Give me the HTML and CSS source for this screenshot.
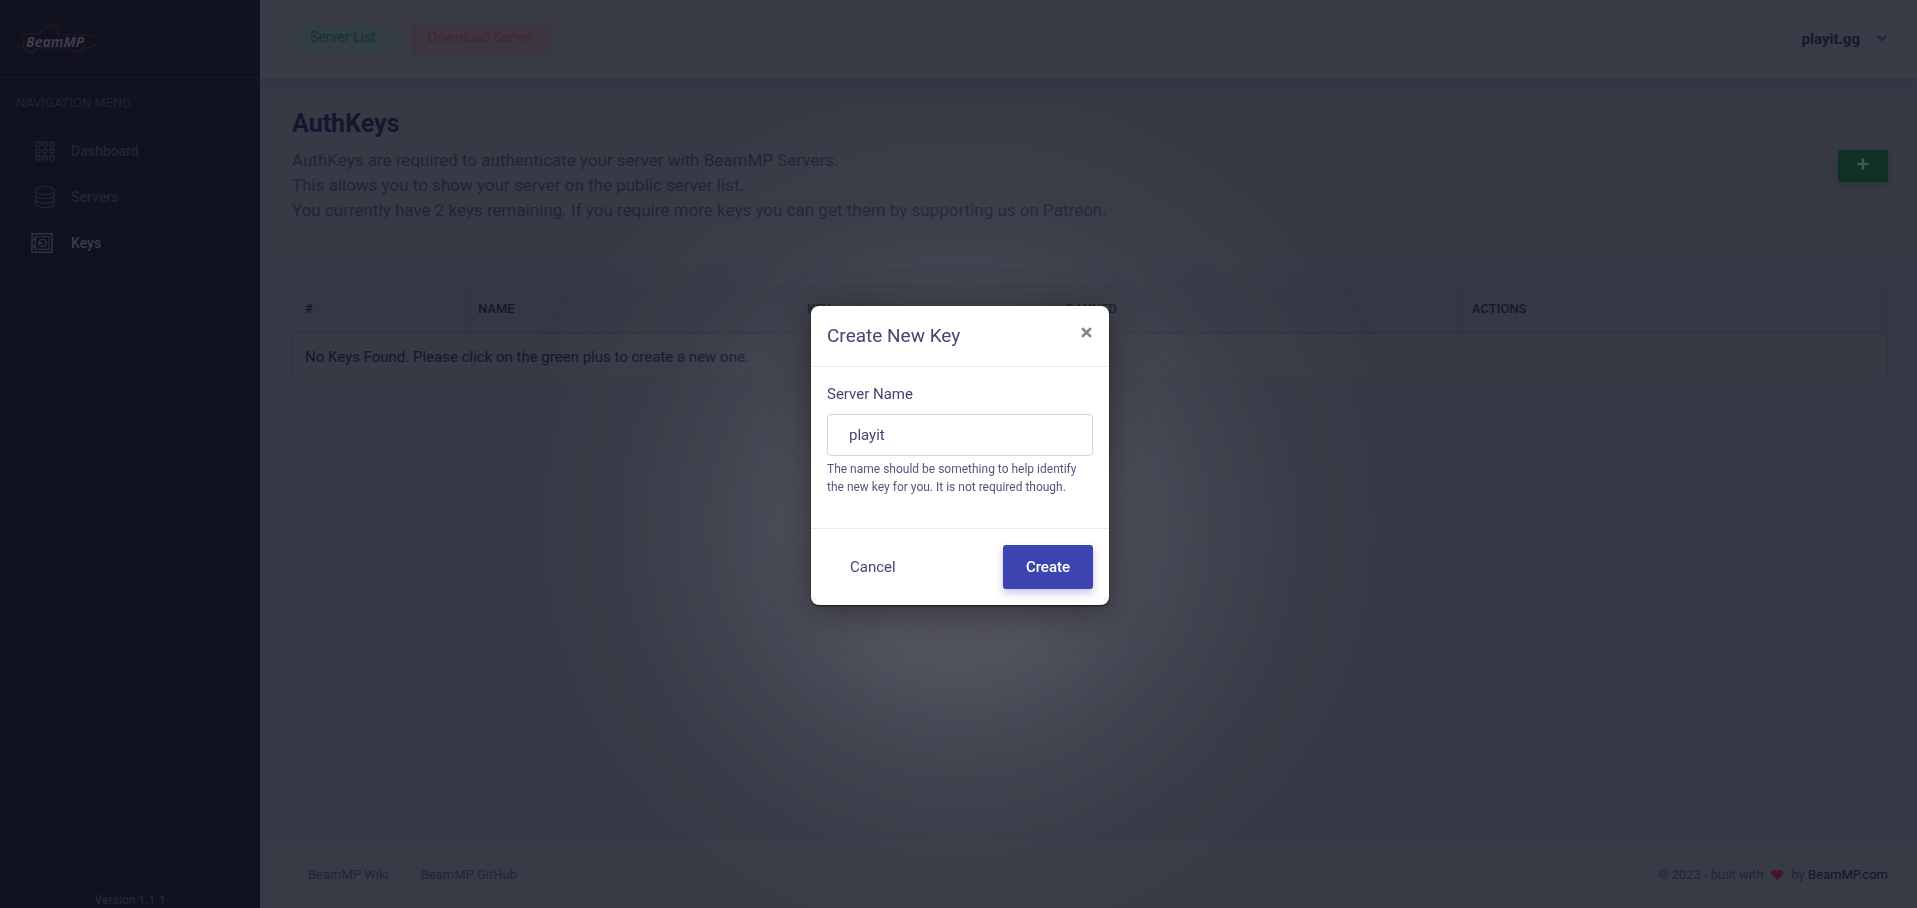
FILE: index.html
```html
<!DOCTYPE html>
<html lang="en">
<head>
<meta charset="utf-8">
<title>BeamMP AuthKeys</title>
<link rel="stylesheet" href="styles.css">
</head>
<body>
<div class="app">
  <aside class="sidebar">
    <a class="brand" href="#" aria-label="BeamMP">
      <svg width="80" height="34" viewBox="0 0 80 34">
        <g fill="none" stroke="#33191a" stroke-width="1.2" stroke-linecap="round">
          <path d="M4 14Q6 12 11 12H22Q30 4 34 3H43"/>
          <path d="M35 5H41V12M46 13H72L76 14"/>
          <path d="M1 25L4 26M7 18Q5 30 13 30Q19 30 20 26M24 26H51"/>
          <path d="M54 27Q57 30 62 30Q67 29 67 20M69 26Q75 25 78 23"/>
        </g>
        <text class="brand-text" x="9" y="25">BeamMP</text>
      </svg>
    </a>
    <h2 class="nav-title">NAVIGATION MENU</h2>
    <nav class="nav">
      <a class="nav-item" href="#">
        <svg width="24" height="24" viewBox="0 0 24 24" fill="none" stroke="currentColor" stroke-width="1.4">
          <circle cx="5" cy="5" r="2.3"/><circle cx="12" cy="5" r="2.3"/><circle cx="19" cy="5" r="2.3"/>
          <circle cx="5" cy="12" r="2.3"/><circle cx="12" cy="12" r="2.3"/><circle cx="19" cy="12" r="2.3"/>
          <circle cx="5" cy="19" r="2.3"/><circle cx="12" cy="19" r="2.3"/><circle cx="19" cy="19" r="2.3"/>
        </svg>
        <span>Dashboard</span>
      </a>
      <a class="nav-item" href="#">
        <svg width="24" height="24" viewBox="0 0 24 24" fill="none" stroke="currentColor" stroke-width="1.2">
          <ellipse cx="12" cy="5.500" rx="9.200" ry="4"/>
          <path d="M2.800 5.500V18.500C2.800 24 21.200 24 21.200 18.500V5.500M2.800 9.800C2.800 15 21.200 15 21.200 9.800M2.800 14.100C2.800 19.400 21.200 19.400 21.200 14.100"/>
        </svg>
        <span>Servers</span>
      </a>
      <a class="nav-item active" href="#">
        <svg class="safe" width="24" height="24" viewBox="0 0 24 24" fill="none" stroke="currentColor">
          <rect x="2" y="2.700" width="20" height="18.600" stroke-width="1.500"/>
          <rect x="5.500" y="5.700" width="13.500" height="12.600" stroke-width="1.100"/>
          <circle cx="12.500" cy="12" r="3.600" stroke-width="1.400"/>
          <path d="M8.500 12H12.500" stroke-width="1.600"/>
          <path d="M4.300 6.500V10M4.300 14V17.500" stroke-width="2"/>
        </svg>
        <span>Keys</span>
      </a>
    </nav>
    <p class="version">Version 1.1.1</p>
  </aside>

  <div class="main">
    <header class="topbar">
      <div class="topbar-links">
        <a class="pill pill-green" href="#">Server List</a>
        <a class="pill pill-red" href="#">Download Server</a>
      </div>
      <button class="account" type="button">
        <span>playit.gg</span>
        <svg width="10" height="8" viewBox="0 0 10 8" fill="none" stroke="#232435" stroke-width="2.200"><path d="M1 1L5 5L9 1"/></svg>
      </button>
    </header>

    <section class="intro">
      <h1>AuthKeys</h1>
      <div class="intro-row">
        <p>AuthKeys are required to authenticate your server with BeamMP Servers.<br>This allows you to show your server on the public server list.<br>You currently have 2 keys remaining. If you require more keys you can get them by supporting us on Patreon.</p>
        <button class="add" type="button" aria-label="Add key">
          <svg width="12" height="12" viewBox="0 0 12 12" stroke="#3d5850" stroke-width="2.400" stroke-linecap="round"><path d="M6 1.200V10.800M1.200 6H10.800"/></svg>
        </button>
      </div>
    </section>

    <main class="content">
      <table class="keys">
        <colgroup><col class="c-num"><col class="c-name"><col class="c-key"><col class="c-banned"><col></colgroup>
        <thead>
          <tr><th>#</th><th>NAME</th><th>KEY</th><th>BANNED</th><th>ACTIONS</th></tr>
        </thead>
        <tbody>
          <tr><td colspan="5">No Keys Found. Please click on the green plus to create a new one.</td></tr>
        </tbody>
      </table>
    </main>

    <footer class="footer">
      <div class="footer-links">
        <a href="#">BeamMP Wiki</a>
        <a href="#">BeamMP GitHub</a>
      </div>
      <p class="credit">
        <span>© 2023 - built with</span>
        <svg width="12" height="10" viewBox="0 0 12 10" fill="#43142b"><path d="M6 10L1 5.200C-1 3 .5 0 3 0C4.500 0 5.500 .8 6 1.600C6.500 .8 7.500 0 9 0C11.500 0 13 3 11 5.200Z"/></svg>
        <span>by <a href="#">BeamMP.com</a></span>
      </p>
    </footer>
  </div>
</div>

<div class="overlay">
  <form class="modal" role="dialog" aria-labelledby="modal-title">
    <div class="modal-header">
      <h2 id="modal-title">Create New Key</h2>
      <button class="close" type="button" aria-label="Close">
        <svg width="11" height="11" viewBox="0 0 10 10" stroke="#85858d" stroke-width="2.500"><path d="M1 1L9 9M9 1L1 9"/></svg>
      </button>
    </div>
    <div class="modal-body">
      <label for="server-name">Server Name</label>
      <input id="server-name" type="text" value="playit">
      <small>The name should be something to help identify the new key for you. It is not required though.</small>
    </div>
    <div class="modal-footer">
      <button class="btn" type="button">Cancel</button>
      <button class="btn btn-primary" type="button">Create</button>
    </div>
  </form>
</div>
</body>
</html>
```
FILE: styles.css
```css
* { box-sizing: border-box; }

body {
  margin: 0;
  font-family: Roboto, "Liberation Sans", sans-serif;
  font-size: 15px;
  background: #363845;
  color: #15162c;
}

h1, h2, p { margin: 0; }
a { color: inherit; text-decoration: none; }
button, input { font: inherit; }
button { border: 0; background: none; padding: 0; color: inherit; }
svg { display: block; flex: none; }

.app { display: flex; min-height: 100vh; }

/* Sidebar */
.sidebar {
  position: relative;
  z-index: 1;
  display: flex;
  flex-direction: column;
  width: 260px;
  flex: none;
  background: #10121f;
}
.brand {
  display: flex;
  align-items: center;
  height: 78px;
  padding: 0 17px;
  border-bottom: 1px solid #181a28;
}
.brand-text {
  font: italic bold 14px "Open Sans", sans-serif;
  fill: #3b3d4b;
}
.nav-title {
  padding: 16px;
  font-size: 13px;
  font-weight: 400;
  line-height: 18px;
  color: #212232;
}
.nav { display: flex; flex-direction: column; }
.nav-item {
  display: flex;
  align-items: center;
  gap: 14px;
  height: 46px;
  padding: 0 33px;
  font-size: 14px;
  font-weight: 500;
  color: #232532;
}
.nav-item.active { background: #0f111e; color: #3a3c49; }
.safe { margin: 0 3px 0 -3px; color: #30323f; }
.version {
  margin-top: auto;
  text-align: center;
  font-size: 12px;
  font-weight: 500;
  line-height: 16px;
  color: #242633;
}

/* Main column */
.main { display: flex; flex-direction: column; flex: 1; min-width: 0; }
.topbar {
  position: relative;
  display: flex;
  align-items: center;
  justify-content: space-between;
  height: 78px;
  padding: 0 29px 0 32px;
  background: #393b47;
  box-shadow: 0 4px 24px rgba(20, 22, 45, 0.12);
}
.topbar-links { display: flex; gap: 16px; }
.pill {
  height: 32px;
  padding: 0 18px;
  border-radius: 3px;
  font-size: 14px;
  line-height: 29px;
}
.pill-green { background: #343c46; color: #10362a; }
.pill-red { background: #3b3640; color: #44262a; }
.account {
  display: flex;
  align-items: center;
  gap: 17px;
  padding-right: 1px;
  font-weight: 700;
  color: #17182f;
}

.intro { padding: 32px 29px 45px 32px; background: #373945; }
.intro h1 { font-size: 25px; font-weight: 700; line-height: 28px; color: #15162e; }
.intro-row { display: flex; justify-content: space-between; padding-top: 10px; }
.intro-row p { font-size: 17px; line-height: 25px; color: #222435; }
.add {
  display: flex;
  justify-content: center;
  align-items: center;
  width: 50px;
  height: 32px;
  margin-top: 2px;
  padding-bottom: 4px;
  border-radius: 3px;
  background: #0f3024;
  box-shadow: 0 3px 6px rgba(15, 48, 36, 0.3);
}

.content { flex: 1; padding: 19px 29px 32px 32px; }
.keys {
  width: 100%;
  table-layout: fixed;
  border-collapse: collapse;
  background: #373945;
}
.c-num { width: 173px; }
.c-name { width: 329px; }
.c-key { width: 259px; }
.c-banned { width: 406px; }
.keys th, .keys td {
  padding: 0 12px;
  border: 1px solid #323441;
  text-align: left;
}
.keys th {
  height: 45px;
  padding-bottom: 3px;
  border-bottom-width: 2px;
  background: #353744;
  font-size: 13px;
  font-weight: 500;
}
.keys td { height: 49px; padding-bottom: 1px; }

.footer {
  display: flex;
  align-items: center;
  justify-content: space-between;
  height: 67px;
  padding: 0 29px 0 48px;
  background: #383a46;
  font-size: 13px;
  color: #222437;
}
.footer-links { display: flex; gap: 32px; }
.credit { display: flex; align-items: center; gap: 8px; }
.credit a { color: #13142a; }

/* Dialog and its lit backdrop */
.overlay {
  position: fixed;
  inset: 0;
  z-index: 2;
  display: grid;
  justify-items: center;
  align-items: center;
  padding: 3px 0 0 3px;
  background: radial-gradient(circle 470px at 50% 58%, rgba(250, 247, 252, 0.2) 0%, rgba(250, 247, 252, 0.14) 28%, rgba(250, 247, 252, 0.07) 48%, rgba(250, 247, 252, 0.025) 70%, rgba(250, 247, 252, 0) 100%);
}
.modal {
  width: 298px;
  border-radius: 8px;
  background: #fff;
  color: #444672;
  box-shadow: 0 1px 2px rgba(0, 0, 0, 0.7), 0 6px 36px rgba(20, 20, 20, 0.55);
}
.modal-header {
  display: flex;
  justify-content: space-between;
  padding: 16px;
  border-bottom: 1px solid #ebebf8;
}
.modal-header h2 { font-size: 19px; font-weight: 400; line-height: 28px; }
.close { align-self: flex-start; padding: 5px 1px; }
.modal-body { display: grid; padding: 16px 16px 32px; }
.modal-body label { line-height: 22px; }
.modal-body input {
  width: 100%;
  height: 42px;
  margin: 9px 0 4px;
  padding: 0 21px;
  border: 1px solid #d1d1e0;
  border-radius: 4px;
  background: #fff;
  color: #444672;
  outline: 0;
}
.modal-body small { font-size: 12px; line-height: 18px; color: #55567f; }
.modal-footer {
  display: flex;
  justify-content: space-between;
  padding: 16px;
  border-top: 1px solid #ebebf8;
}
.btn { height: 44px; padding: 0 23px; border-radius: 3px; }
.btn-primary {
  background: #3d43b1;
  color: #fff;
  font-weight: 500;
  box-shadow: 0 4px 8px rgba(61, 67, 177, 0.3);
}
```
